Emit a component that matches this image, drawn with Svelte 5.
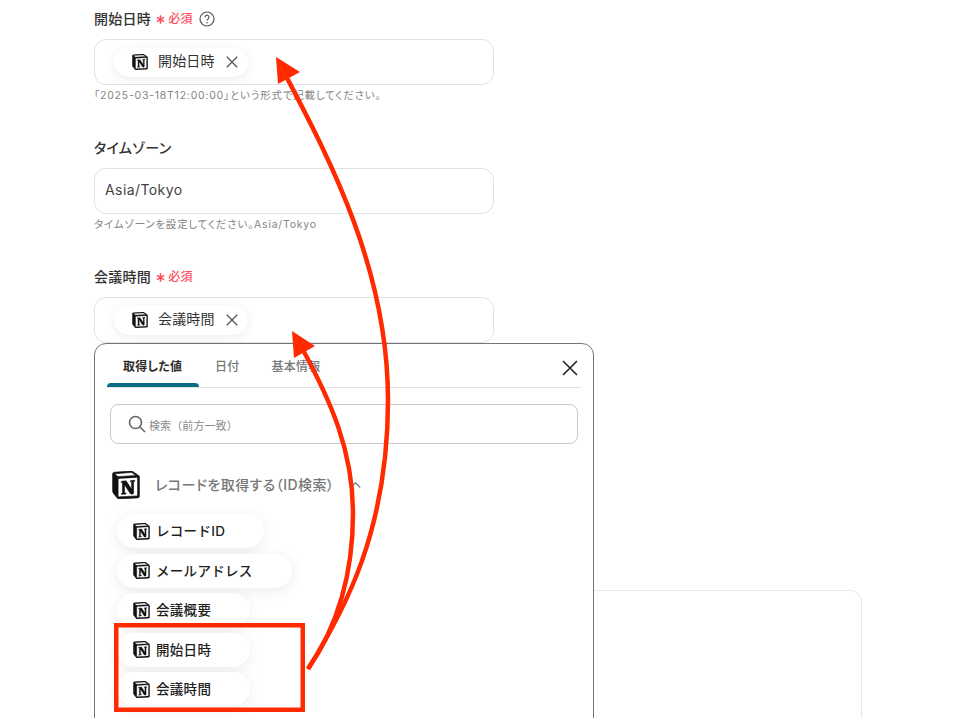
<script lang="ts">
  const chips = [
    { label: 'レコードID', width: 147 },
    { label: 'メールアドレス', width: 175 },
    { label: '会議概要', width: 133 },
    { label: '開始日時', width: 133 },
    { label: '会議時間', width: 133 }
  ];
  const tabs = ['取得した値', '日付', '基本情報'];
</script>

{#snippet notion(size: number)}
  <svg class="notion" width={size} height={size} viewBox="0 0 24 24" aria-hidden="true">
    <path fill="#fff" d="M2 2l15-1 5 4v17l-17 1-4-5z" />
    <path fill="#111" stroke="#111" stroke-width=".5" d="M4.459 4.208c.746.606 1.026.56 2.428.466l13.215-.793c.28 0 .047-.28-.046-.326L17.86 1.968c-.42-.326-.981-.7-2.055-.607L3.01 2.295c-.466.046-.56.28-.374.466zm.793 3.08v13.904c0 .747.373 1.027 1.214.98l14.523-.84c.841-.046.935-.56.935-1.167V6.354c0-.606-.233-.933-.748-.887l-15.177.887c-.56.047-.747.327-.747.933zm14.337.745c.093.42 0 .84-.42.888l-.7.14v10.264c-.608.327-1.168.514-1.635.514-.748 0-.935-.234-1.495-.933l-4.577-7.186v6.952L12.21 19s0 .84-1.168.84l-3.222.186c-.093-.186 0-.653.327-.746l.84-.233V9.854L7.822 9.76c-.094-.42.14-1.026.793-1.073l3.456-.233 4.764 7.279v-6.44l-1.215-.139c-.093-.514.28-.887.747-.933zM1.936 1.035l13.31-.98c1.634-.14 2.055-.047 3.082.7l4.249 2.986c.7.513.934.653.934 1.213v16.378c0 1.026-.373 1.634-1.68 1.726l-15.458.934c-.98.047-1.448-.093-1.962-.747l-3.129-4.06c-.56-.747-.793-1.306-.793-1.96V2.667c0-.839.374-1.54 1.447-1.632z" />
  </svg>
{/snippet}

{#snippet tag(label: string)}
  <span class="tag">
    {@render notion(16)}
    <span class="tag-text">{label}</span>
    <svg class="tag-x" width="12" height="12" viewBox="0 0 12 12" aria-hidden="true">
      <path d="M.8.8l10.4 10.4M11.2.8L.8 11.2" />
    </svg>
  </span>
{/snippet}

{#snippet required()}
  <span class="req">
    <svg class="star" width="9" height="9" viewBox="0 0 9 9" aria-hidden="true">
      <path d="M4.5.3v8.4M.9 2.4l7.2 4.2M8.1 2.4L.9 6.6" />
    </svg>
    必須
  </span>
{/snippet}

<div class="page">
  <div class="form">
    <section class="field first">
      <div class="label">
        開始日時{@render required()}
        <svg class="help" width="16" height="16" viewBox="0 0 16 16" aria-hidden="true">
          <circle cx="8" cy="8" r="7" />
          <path d="M6 6.2a2 2 0 1 1 3.1 1.7c-.7.45-1.1.8-1.1 1.7" />
          <circle class="dot" cx="8" cy="11.8" r=".8" />
        </svg>
      </div>
      <div class="input">{@render tag('開始日時')}</div>
      <p class="hint">「2025-03-18T12:00:00」という形式で記載してください。</p>
    </section>

    <section class="field">
      <div class="label">タイムゾーン</div>
      <div class="input text"><span class="value">Asia/Tokyo</span></div>
      <p class="hint">タイムゾーンを設定してください。Asia/Tokyo</p>
    </section>

    <section class="field anchor">
      <div class="label">会議時間{@render required()}</div>
      <div class="input">{@render tag('会議時間')}</div>

      <div class="popup">
        <div class="tabs">
          {#each tabs as t, i}
            <div class="tab" class:active={i === 0}>{t}</div>
          {/each}
          <svg class="close" width="16" height="16" viewBox="0 0 16 16" aria-hidden="true">
            <path d="M1 1l14 14M15 1L1 15" />
          </svg>
        </div>

        <div class="search">
          <svg width="18" height="18" viewBox="0 0 18 18" aria-hidden="true">
            <circle cx="7.5" cy="7.5" r="6" />
            <path d="M12 12l5 5" />
          </svg>
          <span class="placeholder">検索（前方一致）</span>
        </div>

        <div class="group">
          {@render notion(28)}
          <span class="group-name">レコードを取得する（ID検索）</span>
          <svg class="caret" width="11" height="6" viewBox="0 0 11 6" aria-hidden="true">
            <path d="M.8 5.6L5.5.8l4.7 4.8" />
          </svg>
        </div>

        <div class="chips">
          {#each chips as c}
            <div class="chip" style:width="{c.width}px">
              {@render notion(17)}
              <span class="chip-text">{c.label}</span>
            </div>
          {/each}
        </div>
      </div>
    </section>

    <div class="card"></div>
  </div>

  <svg class="marks" width="978" height="718" viewBox="0 0 978 718" aria-hidden="true">
    <rect x="116.25" y="625.25" width="186.5" height="84.5" />
    <path d="M308 669C345 610 388 530 388 400C388 270 330 160 286 76" />
    <path d="M308 669C335 630 353 580 353 513C353 450 330 400 303 350" />
    <polygon points="276,57 300,72 278,84" />
    <polygon points="292,331 315,346 294,358" />
  </svg>
</div>

<style>
  :global(body) {
    background: #fff;
  }

  .page {
    position: relative;
    height: 718px;
    overflow: hidden;
    background: #fff;
    color: #2b2b2b;
    font-family: Inter, "Noto Sans CJK JP", sans-serif;
    font-feature-settings: "palt";
  }

  .form {
    width: 768px;
    margin-left: 94px;
  }

  .field {
    width: 400px;
    padding-top: 33px;
  }

  .field.first {
    padding-top: 9px;
  }

  .anchor {
    position: relative;
  }

  .label {
    display: flex;
    align-items: center;
    height: 20px;
    margin-bottom: 10px;
    font-size: 14px;
    font-weight: 500;
    letter-spacing: 0.02em;
    line-height: 18px;
    color: #333;
  }

  .req {
    display: inline-flex;
    align-items: center;
    margin-left: 5px;
    color: #ff4d5e;
    font-size: 12px;
    font-weight: 500;
  }

  .star {
    margin: 1px 3px 0 0;
    fill: none;
    stroke: #ff4d5e;
    stroke-width: 1.6;
  }

  .help {
    margin-left: 6px;
    fill: none;
    stroke: #555;
    stroke-width: 1.2;
  }

  .help .dot {
    fill: #555;
    stroke: none;
  }

  .input {
    display: flex;
    align-items: center;
    box-sizing: border-box;
    height: 46px;
    padding-left: 19px;
    border: 1px solid #e0e0e6;
    border-radius: 12px;
    background: #fff;
  }

  .input.text {
    padding-left: 10px;
    font-size: 14px;
    color: #444;
    letter-spacing: 0.03em;
  }

  .value {
    margin-top: -4px;
  }

  .tag {
    display: inline-flex;
    align-items: center;
    gap: 10px;
    box-sizing: border-box;
    width: 134px;
    height: 30px;
    padding-left: 18px;
    border-radius: 15px;
    background: #fff;
    box-shadow: 0 2px 10px rgba(0, 0, 0, 0.08);
    font-size: 14px;
    letter-spacing: 0.01em;
    color: #333;
  }

  .tag-text {
    margin-top: -4px;
  }

  .tag-x {
    margin-left: 1px;
    fill: none;
    stroke: #555;
    stroke-width: 1.3;
  }

  .notion {
    flex: none;
  }

  .hint {
    margin: 3px 0 0;
    height: 17px;
    font-size: 10.5px;
    line-height: 16px;
    color: #858585;
    letter-spacing: 0.77px;
  }

  .popup {
    position: absolute;
    top: 100%;
    left: 0;
    z-index: 2;
    box-sizing: border-box;
    width: 500px;
    height: 420px;
    padding: 0 12px;
    border: 1px solid #757575;
    border-radius: 12px;
    background: #fff;
  }

  .tabs {
    position: relative;
    display: flex;
    align-items: flex-end;
    height: 43px;
    border-bottom: 1px solid #e4e4e4;
  }

  .tab {
    box-sizing: border-box;
    height: 43px;
    padding: 13px 16px 0;
    font-size: 12px;
    font-weight: 500;
    letter-spacing: 0.02em;
    color: #777;
  }

  .tab.active {
    position: relative;
    width: 92px;
    font-weight: 700;
    color: #2b2b2b;
    white-space: nowrap;
  }

  .tab.active::after {
    content: "";
    position: absolute;
    left: 0;
    right: 0;
    bottom: 0;
    height: 4px;
    border-radius: 4px 4px 0 0;
    background: #0b6b82;
  }

  .close {
    position: absolute;
    top: 16px;
    right: 3px;
    fill: none;
    stroke: #222;
    stroke-width: 1.6;
  }

  .search {
    display: flex;
    align-items: center;
    gap: 3px;
    box-sizing: border-box;
    height: 40px;
    margin: 16px 3px 0;
    padding-left: 17px;
    border: 1px solid #c9c9c9;
    border-radius: 8px;
    font-size: 11px;
    color: #8a8a8a;
  }

  .placeholder {
    margin-top: 2px;
    font-feature-settings: normal;
    letter-spacing: 0.1px;
  }

  .search svg {
    fill: none;
    stroke: #666;
    stroke-width: 1.6;
  }

  .group {
    display: flex;
    align-items: center;
    height: 28px;
    margin: 27px 0 0 5px;
  }

  .group-name {
    margin: -2px 0 0 15px;
    font-size: 14px;
    font-weight: 500;
    letter-spacing: 0.45px;
    color: #777;
    white-space: nowrap;
  }

  .caret {
    margin-left: 16px;
    fill: none;
    stroke: #777;
    stroke-width: 1.2;
  }

  .chips {
    display: flex;
    flex-direction: column;
    gap: 5.5px;
    margin: 15px 0 0 10px;
  }

  .chip {
    display: flex;
    align-items: center;
    gap: 7px;
    box-sizing: border-box;
    height: 34px;
    padding-left: 16px;
    border-radius: 17px;
    background: #fff;
    box-shadow: 0 3px 14px rgba(0, 0, 0, 0.08);
    font-size: 13.5px;
    font-weight: 500;
    letter-spacing: 0.3px;
    color: #1f1f1f;
    font-feature-settings: normal;
  }

  .chip-text {
    margin: -2px 0 0 -1px;
  }

  .card {
    box-sizing: border-box;
    height: 200px;
    margin-top: 247px;
    border: 1px solid #e6e6e6;
    border-radius: 12px;
  }

  .marks {
    position: absolute;
    top: 0;
    left: 0;
    z-index: 3;
    pointer-events: none;
    fill: none;
  }

  .marks rect {
    stroke: #ff2a00;
    stroke-width: 4.5;
  }

  .marks path {
    stroke: #ff2a00;
    stroke-width: 4.5;
  }

  .marks polygon {
    fill: #ff2a00;
  }
</style>
